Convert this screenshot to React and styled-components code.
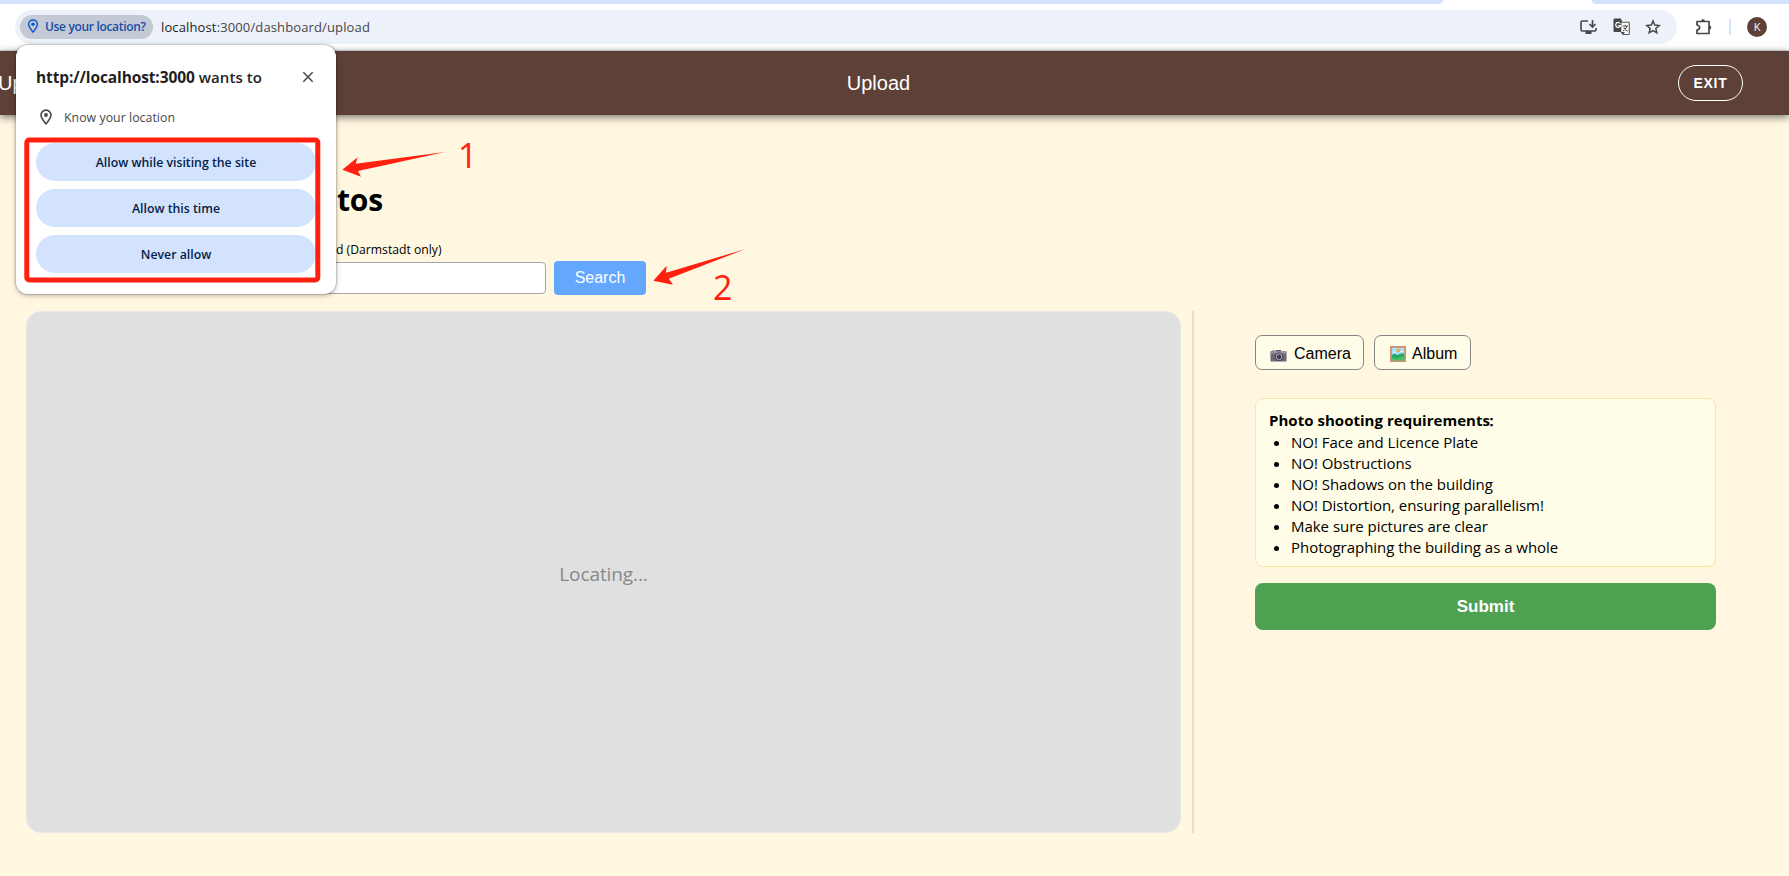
import React from 'react';
import styled, { createGlobalStyle } from 'styled-components';

const GlobalStyle = createGlobalStyle`
  * { box-sizing: border-box; }
  body { margin: 0; background: #fff7e0; overflow: hidden; }
`;

const ui = "'Open Sans', 'Noto Sans', sans-serif";
const arial = "'Liberation Sans', Arial, sans-serif";

const Page = styled.div`
  position: relative;
  width: 100%;
  height: 876px;
  display: flex;
  flex-direction: column;
  background: #fff7e0;
  font-family: ${ui};
  color: #000;
  overflow: hidden;
`;

const Text = styled.span`
  font-size: ${(p) => p.$size}px;
  font-weight: ${(p) => p.$weight || 400};
  letter-spacing: ${(p) => p.$track || 0}px;
  color: ${(p) => p.$color || 'inherit'};
  white-space: pre;
`;

const TabStrip = styled.div`
  display: flex;
  justify-content: space-between;
  height: 4px;
  background: #fff;
`;
const TabStripPart = styled.div`
  width: ${(p) => p.$width}px;
  background: #d3e3fd;
  border-radius: ${(p) => (p.$side === 'left' ? '0 0 6px 0' : '0 0 0 6px')};
`;

const Toolbar = styled.div`
  display: flex;
  align-items: center;
  height: 47px;
  padding: 0 21px 1px 15px;
  background: #fff;
  border-bottom: 1px solid #dcdcdc;
`;
const AddressBar = styled.div`
  display: flex;
  align-items: center;
  width: 1662px;
  height: 34px;
  padding: 0 16px 0 5px;
  border-radius: 17px;
  background: #ecf1fa;
`;
const LocationChip = styled.div`
  display: flex;
  align-items: center;
  gap: 4px;
  width: 133px;
  height: 24px;
  padding: 0 4px 1px 5px;
  margin-right: 8px;
  border-radius: 12px;
  background: #c3c9d5;
`;
const BarIcons = styled.div`
  display: flex;
  align-items: center;
  gap: 15.5px;
  margin-left: auto;
`;
const ExtensionSlot = styled.div`
  display: flex;
  margin-left: 18px;
`;
const Separator = styled.div`
  width: 2px;
  height: 16px;
  margin: 0 16px;
  background: #d3e3fd;
`;
const Avatar = styled.div`
  display: flex;
  align-items: center;
  justify-content: center;
  width: 20px;
  height: 20px;
  border-radius: 50%;
  background: #5d4037;
  color: #fff;
  font-size: 11px;
`;

const Header = styled.header`
  display: grid;
  grid-template-columns: 1fr auto 1fr;
  align-items: center;
  flex: none;
  height: 64px;
  padding: 0 46px 0 0;
  background: #5d4037;
  color: #fff;
  font-family: ${arial};
  font-size: 20px;
  box-shadow: 0 2px 8px rgba(0, 0, 0, 0.55);
`;
const HeaderBrand = styled.div`
  margin-left: -2px;
`;
const HeaderTitle = styled.div`
  margin-left: 14px;
`;
const ExitButton = styled.button`
  justify-self: end;
  width: 65px;
  height: 36px;
  padding: 0;
  border: 1px solid #fff;
  border-radius: 18px;
  background: none;
  color: #fff;
  font: bold 14px ${arial};
  letter-spacing: 0.7px;
`;

const Main = styled.main`
  padding: 61px 73px 0 26px;
`;
const Title = styled.h1`
  margin: 0;
  padding-left: 311px;
  height: 49px;
  font-size: 30px;
  line-height: 48px;
  letter-spacing: -0.2px;
`;
const FieldLabel = styled.div`
  height: 20px;
  margin-top: 14px;
  padding: 1px 0 0 310px;
  line-height: 20px;
  font-size: 12.2px;
`;
const SearchRow = styled.div`
  display: flex;
  align-items: center;
  gap: 8px;
  height: 34px;
  margin-top: 2px;
`;
const SearchInput = styled.input`
  width: 520px;
  height: 32px;
  border: 1px solid #a6a6a6;
  border-radius: 4px;
  background: #fff;
`;
const SearchButton = styled.button`
  width: 92px;
  height: 34px;
  padding: 0;
  border: 0;
  border-radius: 4px;
  background: #64a7ff;
  color: #fff;
  font: 16px ${arial};
`;

const Columns = styled.div`
  display: flex;
  margin-top: 16px;
`;
const MapPanel = styled.section`
  display: flex;
  align-items: center;
  justify-content: center;
  width: 1155px;
  height: 522px;
  padding-top: 3px;
  border: 1px solid #e8e8ea;
  border-radius: 15px;
  background: #e0e0e0;
`;
const Side = styled.aside`
  flex: 1;
  margin-left: 11px;
  padding: 24px 0 0 61px;
  border-left: 2px solid #e7dfca;
`;
const PickRow = styled.div`
  display: flex;
  gap: 10px;
  margin-bottom: 28px;
`;
const PickButton = styled.button`
  display: flex;
  align-items: center;
  gap: ${(p) => p.$gap}px;
  width: ${(p) => p.$width}px;
  height: 35px;
  padding: 3px 0 0 ${(p) => p.$inset}px;
  border: 1px solid #868686;
  border-radius: 7px;
  background: #fffde7;
  color: #000;
  font: 16px ${arial};
`;
const Requirements = styled.section`
  height: 169px;
  padding: 11px 13px;
  border: 1px solid #f5e9a2;
  border-radius: 8px;
  background: #fffde7;
`;
const RequirementsTitle = styled.div`
  height: 22px;
  line-height: 21px;
  font-size: 15px;
  font-weight: 700;
  letter-spacing: 0.03px;
`;
const Colon = styled.span`
  margin-left: -6px;
`;
const RequirementList = styled.ul`
  margin: 0;
  padding-left: 22px;
`;
const Requirement = styled.li`
  height: 21px;
  line-height: 21px;
  font-size: 15px;
  letter-spacing: -0.03px;
`;
const SubmitButton = styled.button`
  width: 100%;
  height: 47px;
  margin-top: 16px;
  padding: 0;
  border: 0;
  border-radius: 8px;
  background: #4fa152;
  color: #fff;
  font: bold 17px ${arial};
`;

const Popup = styled.div`
  position: absolute;
  left: 16px;
  top: 45px;
  width: 320px;
  height: 249px;
  padding: 20px 20px 0 20px;
  border-radius: 12px;
  background: #fff;
  box-shadow: 0 0 0 1px rgba(0, 0, 0, 0.1), 0 1px 5px rgba(0, 0, 0, 0.35);
`;
const PopupHead = styled.div`
  display: flex;
  align-items: center;
  justify-content: space-between;
  height: 24px;
  padding: 0 2px 1px 0;
`;
const PermissionLine = styled.div`
  display: flex;
  align-items: center;
  gap: 12px;
  height: 20px;
  margin: 18px 0 16px;
  padding-left: 4px;
`;
const Choices = styled.div`
  display: flex;
  flex-direction: column;
  gap: 8px;
`;
const Choice = styled.button`
  height: 38px;
  padding: 0;
  border: 0;
  border-radius: 19px;
  background: #d3e3fd;
  color: #041e49;
  font-family: ${ui};
`;
const Annotations = styled.svg`
  position: absolute;
  inset: 0;
  pointer-events: none;
`;
const StepNumber = styled.span`
  position: absolute;
  left: ${(p) => p.$x}px;
  top: ${(p) => p.$y}px;
  color: #ff2010;
  font-size: 34px;
  line-height: 40px;
`;

const PinIcon = ({ w = 12, h = 16, color, sw = 1.6 }) => (
  <svg width={w} height={h} viewBox="0 0 12 16" fill="none">
    <path d="M6 15C3.2 11.7 1 9 1 6.1a5 5 0 0 1 10 0C11 9 8.8 11.7 6 15Z" stroke={color} strokeWidth={sw} strokeLinejoin="round" />
    <circle cx="6" cy="6" r="1.9" fill={color} />
  </svg>
);

const InstallIcon = () => (
  <svg width="17" height="16" viewBox="0 0 17 16" fill="none" stroke="#474747" strokeWidth="1.6">
    <path d="M8 2H2.2Q1 2 1 3.200V10.800Q1 12 2.200 12H14.800Q16 12 16 10.800V9" />
    <path d="M5.500 12H11.500V15H5.500Z" fill="#474747" stroke="none" />
    <path d="M12.500 1V7.500M9.500 5L12.500 8L15.500 5" />
  </svg>
);

const TranslateIcon = () => (
  <svg width="17" height="18" viewBox="0 0 17 18">
    <path d="M1.500 .500H8L12 14H1.500Q.500 14 .500 13V1.500Q.500 .500 1.500 .500Z" fill="#474747" />
    <path d="M8.500 4.200H15.500Q16.300 4.200 16.300 5V15.700Q16.300 16.500 15.500 16.500H10L8.200 14" fill="#fff" stroke="#5a5a5a" strokeWidth="1.100" />
    <path d="M7.300 5.600A2.500 2.500 0 1 0 7.600 7.700H5.200" fill="none" stroke="#fff" strokeWidth="1.200" />
    <path d="M9.500 8H15M12.200 6.700V8M14 8Q13 11.300 10 13M10.700 9.500Q12.200 12 14.600 13.300" fill="none" stroke="#5a5a5a" strokeWidth="1.100" />
    <path d="M8 14H12L10 16.500Z" fill="#474747" />
  </svg>
);

const StarIcon = () => (
  <svg width="16" height="16" viewBox="0 0 16 16" fill="none" stroke="#474747" strokeWidth="1.500">
    <path d="M8 2L9.700 6.100L14.200 6.500L10.800 9.400L11.850 13.800L8 11.500L4.150 13.800L5.200 9.400L1.800 6.500L6.300 6.100Z" />
  </svg>
);

const ExtensionIcon = () => (
  <svg width="18" height="18" viewBox="0 0 18 18" fill="none">
    <path d="M2 3.500H14V15.500H2V12Q4.600 11.500 4.600 9.500Q4.600 7.500 2 7Z" stroke="#474747" strokeWidth="1.700" strokeLinejoin="round" />
    <path d="M6 3.500a2 2.300 0 0 1 4 0ZM14 7.500a2.300 2 0 0 1 0 4Z" fill="#474747" />
  </svg>
);

const CloseIcon = () => (
  <svg width="12" height="12" viewBox="0 0 12 12" stroke="#474747" strokeWidth="1.500">
    <path d="M1.300 1.300L10.700 10.700M10.700 1.300L1.300 10.700" />
  </svg>
);

const CameraIcon = () => (
  <svg width="17" height="16" viewBox="0 0 17 16">
    <path d="M2 4.500H5V5.500H2ZM6 4H11V6H6Z" fill="#55505f" />
    <rect x=".500" y="5.200" width="16" height="10.300" rx=".6" fill="#6d6777" />
    <path d="M.500 5.200H16.500V7.500H.500Z" fill="#9a94a4" />
    <circle cx="9" cy="10.700" r="4.300" fill="#4a4553" />
    <circle cx="9" cy="10.700" r="3.100" fill="#b4aebd" />
    <circle cx="9" cy="10.700" r="2.200" fill="#35303e" />
    <circle cx="8.500" cy="10.100" r=".7" fill="#8d9bc0" />
  </svg>
);

const PictureIcon = () => (
  <svg width="16" height="16" viewBox="0 0 16 16">
    <rect width="16" height="16" fill="#d0906a" />
    <rect x="1.800" y="1.800" width="12.400" height="12.400" fill="#a9def5" />
    <circle cx="8.500" cy="4.500" r="1.800" fill="#f3a83c" />
    <path d="M3 6.500Q4.500 4.500 6 6.500ZM10 6Q12 3.800 13.500 6Z" fill="#fff" />
    <path d="M1.800 9.500Q4 6.500 7 9L10 8Q12 6.500 14.200 8V14.200H1.800Z" fill="#25a867" />
    <path d="M1.800 11Q5 13.500 9 11.500Q12 10 14.200 11.500V14.200H1.800Z" fill="#48bf62" />
  </svg>
);

const requirements = [
  'NO! Face and Licence Plate',
  'NO! Obstructions',
  'NO! Shadows on the building',
  'NO! Distortion, ensuring parallelism!',
  'Make sure pictures are clear',
  'Photographing the building as a whole',
];

const choices = ['Allow while visiting the site', 'Allow this time', 'Never allow'];

export default function App() {
  return (
    <Page>
      <GlobalStyle />
      <TabStrip>
        <TabStripPart $side="left" $width={1443} />
        <TabStripPart $side="right" $width={197} />
      </TabStrip>
      <Toolbar>
        <AddressBar>
          <LocationChip>
            <PinIcon w={16} h={14} color="#0b57d0" sw={1.7} />
            <Text $size={12} $weight={600} $track={-0.33} $color="#174ea6">Use your location?</Text>
          </LocationChip>
          <Text $size={13} $track={0.13} $color="#1f1f1f">localhost</Text>
          <Text $size={13} $track={0.13} $color="#474747">:3000/dashboard/upload</Text>
          <BarIcons>
            <InstallIcon />
            <TranslateIcon />
            <StarIcon />
          </BarIcons>
        </AddressBar>
        <ExtensionSlot><ExtensionIcon /></ExtensionSlot>
        <Separator />
        <Avatar>K</Avatar>
      </Toolbar>
      <Header>
        <HeaderBrand>Up</HeaderBrand>
        <HeaderTitle>Upload</HeaderTitle>
        <ExitButton>EXIT</ExitButton>
      </Header>
      <Main>
        <Title>tos</Title>
        <FieldLabel>d (Darmstadt only)</FieldLabel>
        <SearchRow>
          <SearchInput />
          <SearchButton>Search</SearchButton>
        </SearchRow>
        <Columns>
          <MapPanel>
            <Text $size={19} $track={-0.1} $color="#888">Locating...</Text>
          </MapPanel>
          <Side>
            <PickRow>
              <PickButton $width={109} $inset={14} $gap={7}><CameraIcon />Camera</PickButton>
              <PickButton $width={97} $inset={15} $gap={6}><PictureIcon />Album</PickButton>
            </PickRow>
            <Requirements>
              <RequirementsTitle>Photo shooting requirements<Colon>：</Colon></RequirementsTitle>
              <RequirementList>
                {requirements.map((r) => <Requirement key={r}>{r}</Requirement>)}
              </RequirementList>
            </Requirements>
            <SubmitButton>Submit</SubmitButton>
          </Side>
        </Columns>
      </Main>
      <Popup>
        <PopupHead>
          <div>
            <Text $size={15.5} $weight={700} $track={-0.12} $color="#1f1f1f">http://localhost:3000</Text>
            <Text $size={15} $weight={600} $track={0.1} $color="#1f1f1f"> wants to</Text>
          </div>
          <CloseIcon />
        </PopupHead>
        <PermissionLine>
          <PinIcon color="#474747" sw={1.6} />
          <Text $size={12.3} $track={0.05} $color="#474747">Know your location</Text>
        </PermissionLine>
        <Choices>
          {choices.map((c) => (
            <Choice key={c}><Text $size={12.3} $weight={600}>{c}</Text></Choice>
          ))}
        </Choices>
      </Popup>
      <Annotations width="1789" height="876" viewBox="0 0 1789 876">
        <rect x="26.800" y="140" width="291" height="140" rx="2.500" fill="none" stroke="#ff2010" strokeWidth="5" />
        <path d="M342.300 169.700L357.700 157.300L355.700 163.700L445 152L358 171L361 176.700Z" fill="#ff2010" />
        <path d="M653.300 280.700L666.700 265.700L666 272.700L745.700 249L668.700 278.700L673 284.700Z" fill="#ff2010" />
      </Annotations>
      <StepNumber $x={458} $y={135}>1</StepNumber>
      <StepNumber $x={713} $y={267}>2</StepNumber>
    </Page>
  );
}
